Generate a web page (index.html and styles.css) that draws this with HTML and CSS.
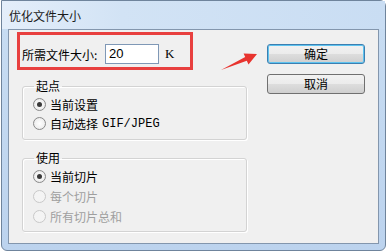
FILE: index.html
```html
<!DOCTYPE html>
<html>
<head>
<meta charset="utf-8">
<title>优化文件大小</title>
<link rel="stylesheet" href="styles.css">
</head>
<body>
<div class="window">
	<div class="titlebar">优化文件大小</div>
	<div class="client">
		<div class="leftcol">
			<div class="sizebox">
				<span class="label">所需文件大小:</span>
				<span class="textbox">20</span>
				<span class="unit">K</span>
			</div>
			<fieldset class="group first">
				<legend>起点</legend>
				<div class="radio checked"><span class="dot"></span>当前设置</div>
				<div class="radio"><span class="dot"></span>自动选择 <span class="mono">GIF/JPEG</span></div>
			</fieldset>
			<fieldset class="group second">
				<legend>使用</legend>
				<div class="radio checked"><span class="dot"></span>当前切片</div>
				<div class="radio disabled"><span class="dot"></span>每个切片</div>
				<div class="radio disabled"><span class="dot"></span>所有切片总和</div>
			</fieldset>
		</div>
		<div class="buttons">
			<div class="button default">确定</div>
			<div class="button">取消</div>
		</div>
	</div>
	<svg class="arrow" width="386" height="252" viewBox="0 0 386 252">
		<polygon points="221,70 246.8,60.7 248.5,64.4 257,54 243.6,53.4 245.2,57.1" fill="#e8342f"/>
	</svg>
</div>
</body>
</html>
```

FILE: styles.css
```css
html, body {
	margin: 0;
	padding: 0;
	background: #ffffff;
}

body {
	font-family: "Noto Sans CJK SC", "Liberation Sans", sans-serif;
	font-size: 12px;
	color: #000000;
}

.window {
	position: relative;
	width: 383px;
	height: 249px;
	margin-left: 1px;
	border: 1px solid #6f849c;
	border-radius: 0 6px 6px 6px;
	background: linear-gradient(to bottom, #d6e6f7 0px, #c7dcf2 28px, #bcd3ee 100%);
}

.titlebar {
	height: 28px;
	line-height: 30px;
	padding-left: 7px;
	font-size: 12px;
	color: #1b1b1b;
	background: linear-gradient(to right, #e4eefa 0px, #d2e3f5 120px, #c9ddf3 100%);
}

.client {
	display: flex;
	height: 213px;
	margin: 0 6px 0 6px;
	border: 1px solid #8396ad;
	background: #f0f0f0;
}

.leftcol {
	width: 232px;
	padding-left: 8px;
	padding-top: 2px;
}

.sizebox {
	display: flex;
	align-items: center;
	width: 168px;
	height: 26px;
	padding: 6px 0 0 2px;
	border: 3px solid #e8403f;
}

.label {
	width: 83px;
}

.textbox {
	width: 49px;
	height: 18px;
	line-height: 18px;
	padding-left: 3px;
	border: 1px solid #7f98b6;
	background: #ffffff;
	font-family: "Liberation Sans", sans-serif;
	font-size: 13px;
}

.unit {
	margin-left: 6px;
	font-family: "Liberation Serif", serif;
	font-size: 13px;
}

.group {
	margin: 0;
	margin-left: 5px;
	width: 225px;
	border: 1px solid #d3d3d3;
	border-radius: 3px;
	box-shadow: inset 1px 1px 0 #ffffff, 1px 1px 0 #ffffff;
	padding: 2px 0 0 10px;
	box-sizing: border-box;
}

.group legend {
	padding: 0 2px;
	margin-left: 1px;
	line-height: 14px;
}

.group.first {
	margin-top: 9px;
	height: 61px;
}

.group.second {
	margin-top: 11px;
	height: 81px;
	padding-top: 1px;
}

.radio {
	display: flex;
	align-items: center;
	height: 19px;
}

.second .radio {
	height: 20px;
}

.dot {
	position: relative;
	width: 11px;
	height: 11px;
	margin-right: 4px;
	border: 1px solid #8a8a8a;
	border-radius: 50%;
	background: radial-gradient(circle at 50% 50%, #ffffff 0%, #f0f0f0 60%, #d9d9d9 100%);
}

.checked .dot::after {
	content: "";
	position: absolute;
	left: 3px;
	top: 3px;
	width: 5px;
	height: 5px;
	border-radius: 50%;
	background: #3a3a3a;
}

.disabled {
	color: #9f9f9f;
}

.disabled .dot {
	border-color: #c9c9c9;
	background: #f4f4f4;
}

.mono {
	margin-left: 4px;
	font-family: "Liberation Mono", monospace;
	font-size: 12px;
}

.buttons {
	display: flex;
	flex-direction: column;
	gap: 10px;
	margin-left: 18px;
	padding-top: 14px;
}

.button {
	width: 96px;
	height: 18px;
	line-height: 18px;
	text-align: center;
	border: 1px solid #707070;
	border-radius: 3px;
	background: linear-gradient(to bottom, #f2f2f2 0%, #ebebeb 50%, #dddddd 51%, #cfcfcf 100%);
}

.button.default {
	border-color: #3c7fb1;
	box-shadow: inset 0 0 0 1px #5ec3ef;
}

.arrow {
	position: absolute;
	left: -2px;
	top: -1px;
	pointer-events: none;
}
```
